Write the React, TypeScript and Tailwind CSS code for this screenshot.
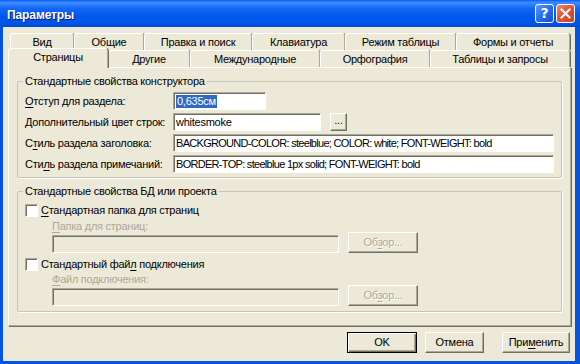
import type { ReactNode } from "react";

const FONT = "font-['Liberation_Sans',Arial,sans-serif]";

const backTabs = [
  { label: "Вид", w: "w-[64px]" },
  { label: "Общие", w: "w-[70px]" },
  { label: "Правка и поиск", w: "w-[108px]" },
  { label: "Клавиатура", w: "w-[93px]" },
  { label: "Режим таблицы", w: "w-[111px]" },
  { label: "Формы и отчеты", w: "w-[114px]" },
];

const frontTabs = [
  { label: "Другие", w: "w-[82px]" },
  { label: "Международные", w: "w-[130px]" },
  { label: "Орфография", w: "w-[110px]" },
  { label: "Таблицы и запросы", w: "w-[140px]" },
];

function U({ children, className = "" }: { children: ReactNode; className?: string }) {
  return <span className={`underline underline-offset-[2px] ${className}`}>{children}</span>;
}

function Tab({ label, w }: { label: string; w: string }) {
  return (
    <div
      className={`${w} h-[17px] flex items-center justify-center pt-px border-t border-l border-white border-r border-r-[#aca899] rounded-t-[3px] shadow-[1px_0_0_#716f64]`}
    >
      {label}
    </div>
  );
}

const inset =
  "border border-t-[#aca899] border-l-[#aca899] border-b-white border-r-white shadow-[inset_1px_1px_0_#716f64]";

const raised =
  "border border-t-white border-l-white border-b-[#716f64] border-r-[#716f64] shadow-[inset_-1px_-1px_0_#aca899]";

function Field({ w, children }: { w: string; children?: ReactNode }) {
  return (
    <div
      className={`${w} h-[18px] bg-white ${inset} flex items-center pl-[2px] whitespace-nowrap overflow-hidden tracking-[-0.7px]`}
    >
      {children}
    </div>
  );
}

function Row({ label, children }: { label: ReactNode; children: ReactNode }) {
  return (
    <div className="flex items-center h-[18px]">
      <div className="w-[148px] whitespace-nowrap">{label}</div>
      {children}
    </div>
  );
}

function BrowseRow({ caption, checkLabel, gapTop }: { caption: ReactNode; checkLabel: ReactNode; gapTop: string }) {
  return (
    <div className="flex flex-col">
      <div className="flex items-center h-[13px]">
        <div className={`w-[13px] h-[13px] bg-white ${inset}`} />
        <span className="ml-[3px]">{checkLabel}</span>
      </div>
      <div className={`ml-[27px] ${gapTop} h-[13px] text-[#aca899]`}>{caption}</div>
      <div className="flex items-end ml-[27px] -mt-[1px]">
        <div className={`w-[287px] h-[18px] bg-[#ece9d8] ${inset}`} />
        <div
          className={`ml-[9px] w-[70px] h-[21px] ${raised} flex items-center justify-center text-[#aca899] [text-shadow:1px_1px_0_#fff]`}
        >
          <span>
            Об<U>з</U>ор...
          </span>
        </div>
      </div>
    </div>
  );
}

export default function App() {
  return (
    <div
      className={`${FONT} w-[580px] h-[364px] text-[11px] leading-[13px] tracking-[-0.25px] text-black bg-[#0553e1] flex flex-col overflow-hidden`}
    >
      {/* Title bar */}
      <div className="h-[27px] shrink-0 flex items-center justify-between pl-[7px] pr-[5px] bg-[linear-gradient(to_bottom,#0a5df5_0%,#3d8eff_10%,#1468f5_30%,#0058ee_60%,#0054e3_90%,#0048d4_100%)]">
        <span className="text-white font-bold text-[12px] mt-[3px] [text-shadow:1px_1px_0_#0a1883] tracking-[-0.1px]">
          Параметры
        </span>
        <div className="flex gap-[2px] -mt-[1px]">
          <div className="w-[19px] h-[19px] rounded-[3px] border border-white bg-[linear-gradient(135deg,#5a9bff_0%,#2a6ff2_45%,#1350d8_100%)] flex items-center justify-center text-white font-bold text-[14px] leading-none font-['DejaVu_Sans',sans-serif]">
            ?
          </div>
          <div className="w-[19px] h-[19px] rounded-[3px] border border-white bg-[linear-gradient(135deg,#f08a6e_0%,#e0573c_45%,#c6401f_100%)] flex items-center justify-center">
            <svg width="11" height="11" viewBox="0 0 11 11">
              <path d="M1.5 1.5 L9.5 9.5 M9.5 1.5 L1.5 9.5" stroke="#fff" strokeWidth="2" strokeLinecap="square" />
            </svg>
          </div>
        </div>
      </div>

      {/* Client area */}
      <div className="flex-1 ml-[3px] mr-[5px] mb-[3px] bg-[#ece9d8] pt-[6px] pl-[5px] pr-[4px] flex flex-col">
        {/* Back tab row */}
        <div className="flex h-[17px] ml-[2px]">
          {backTabs.map((t) => (
            <Tab key={t.label} {...t} />
          ))}
        </div>
        {/* Front tab row */}
        <div className="flex h-[17px] items-start">
          <div className="relative z-10 w-[100px] h-[20px] -mt-[2px] flex items-center justify-center pb-[2px] bg-[#ece9d8] border-t border-l border-white border-r border-r-[#aca899] rounded-t-[3px] shadow-[1px_0_0_#716f64]">
            Страницы
          </div>
          {frontTabs.map((t) => (
            <Tab key={t.label} {...t} />
          ))}
        </div>

        {/* Panel */}
        <div className="h-[259px] border border-t-white border-l-white border-b-[#aca899] border-r-[#aca899] shadow-[1px_1px_0_#716f64] px-[8px] flex flex-col">
          <fieldset className="mt-[6px] border border-[#c8c5b5] rounded-[2px] px-[7px] pb-[4px] shadow-[1px_1px_0_#fff]">
            <legend className="px-[2px] -ml-[2px] leading-[14px]">Стандартные свойства конструктора</legend>
            <div className="flex flex-col gap-[3px] mt-[4px]">
              <Row
                label={
                  <>
                    <U>О</U>тступ для раздела:
                  </>
                }
              >
                <Field w="w-[93px]">
                  <span className="bg-[#316ac5] text-white px-px tracking-[-0.25px]">0,635см</span>
                </Field>
              </Row>
              <Row
                label={
                  <>
                    <U>Д</U>ополнительный цвет строк:
                  </>
                }
              >
                <Field w="w-[148px]">
                  <span className="tracking-[-0.25px]">whitesmoke</span>
                </Field>
                <div className={`ml-[9px] w-[17px] h-[18px] ${raised} flex items-center justify-center pb-[3px]`}>
                  ...
                </div>
              </Row>
              <Row
                label={
                  <>
                    С<U>т</U>иль раздела заголовка:
                  </>
                }
              >
                <Field w="w-[381px]">BACKGROUND-COLOR: steelblue; COLOR: white; FONT-WEIGHT: bold</Field>
              </Row>
              <Row
                label={
                  <>
                    Сти<U>л</U>ь раздела примечаний:
                  </>
                }
              >
                <Field w="w-[381px]">BORDER-TOP: steelblue 1px solid; FONT-WEIGHT: bold</Field>
              </Row>
            </div>
          </fieldset>

          <fieldset className="mt-[6px] border border-[#c8c5b5] rounded-[2px] px-[7px] pb-[5px] shadow-[1px_1px_0_#fff]">
            <legend className="px-[2px] -ml-[2px] leading-[14px]">Стандартные свойства БД или проекта</legend>
            <div className="flex flex-col gap-[5px] mt-[6px]">
              <BrowseRow
                gapTop="mt-[3px]"
                checkLabel={
                  <>
                    <U>С</U>тандартная папка для страниц
                  </>
                }
                caption={
                  <>
                    <U>П</U>апка для страниц:
                  </>
                }
              />
              <BrowseRow
                gapTop="mt-[2px]"
                checkLabel={
                  <>
                    Стандартный фай<U>л</U> подключения
                  </>
                }
                caption={
                  <>
                    <U>Ф</U>айл подключения:
                  </>
                }
              />
            </div>
          </fieldset>
        </div>

        {/* Dialog buttons */}
        <div className="flex justify-end mt-[6px] pr-px">
          <div className="w-[70px] h-[21px] border border-black shadow-[inset_1px_1px_0_#fff,inset_-1px_-1px_0_#716f64,inset_-2px_-2px_0_#aca899] flex items-center justify-center">
            OK
          </div>
          <div className={`ml-[8px] w-[59px] h-[21px] ${raised} flex items-center justify-center`}>Отмена</div>
          <div className={`ml-[18px] w-[68px] h-[21px] ${raised} flex items-center justify-center`}>
            <span>
              При<U>м</U>енить
            </span>
          </div>
        </div>
      </div>
    </div>
  );
}
